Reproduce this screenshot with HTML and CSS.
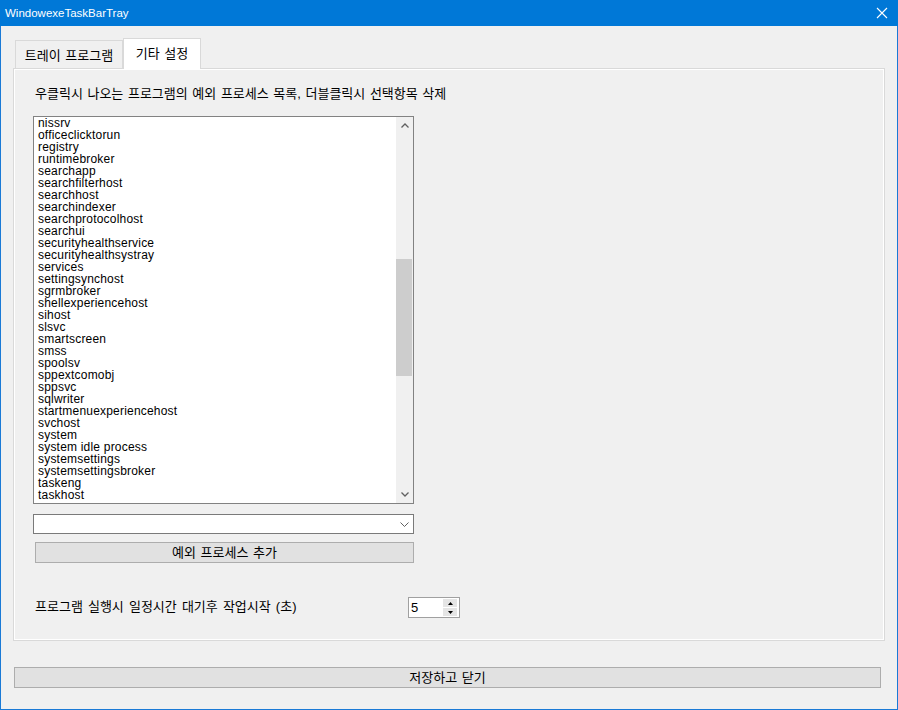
FILE: index.html
```html
<!DOCTYPE html>
<html lang="ko">
  <head>
    <meta charset="UTF-8" />
    <title>WindowexeTaskBarTray</title>
    <link rel="stylesheet" href="styles.css">
  </head>
  <body>
    <div class="window">
      <div class="titlebar">
        <span class="title">WindowexeTaskBarTray</span>
        <svg class="close" width="12" height="12" viewBox="0 0 12 12">
          <path d="M1 1 L11 11 M11 1 L1 11" stroke="#fff" stroke-width="1.1" fill="none" />
        </svg>
      </div>

      <div class="content">
        <div class="tabs">
          <div class="tab">트레이 프로그램</div>
          <div class="tab active">기타 설정</div>
        </div>

        <div class="pane">
          <div class="desc">우클릭시 나오는 프로그램의 예외 프로세스 목록, 더블클릭시 선택항목 삭제</div>

          <div class="listbox">
            <ul class="items">
              <li>nissrv</li>
              <li>officeclicktorun</li>
              <li>registry</li>
              <li>runtimebroker</li>
              <li>searchapp</li>
              <li>searchfilterhost</li>
              <li>searchhost</li>
              <li>searchindexer</li>
              <li>searchprotocolhost</li>
              <li>searchui</li>
              <li>securityhealthservice</li>
              <li>securityhealthsystray</li>
              <li>services</li>
              <li>settingsynchost</li>
              <li>sgrmbroker</li>
              <li>shellexperiencehost</li>
              <li>sihost</li>
              <li>slsvc</li>
              <li>smartscreen</li>
              <li>smss</li>
              <li>spoolsv</li>
              <li>sppextcomobj</li>
              <li>sppsvc</li>
              <li>sqlwriter</li>
              <li>startmenuexperiencehost</li>
              <li>svchost</li>
              <li>system</li>
              <li>system idle process</li>
              <li>systemsettings</li>
              <li>systemsettingsbroker</li>
              <li>taskeng</li>
              <li>taskhost</li>
            </ul>
            <div class="scrollbar">
              <div class="sb-btn">
                <svg width="8" height="5" viewBox="0 0 8 5"><path d="M0.5 4.5 L4 1 L7.5 4.5" stroke="#606060" stroke-width="1.3" fill="none" /></svg>
              </div>
              <div class="sb-track"><div class="sb-thumb"></div></div>
              <div class="sb-btn">
                <svg width="8" height="5" viewBox="0 0 8 5"><path d="M0.5 0.5 L4 4 L7.5 0.5" stroke="#606060" stroke-width="1.3" fill="none" /></svg>
              </div>
            </div>
          </div>

          <div class="combo">
            <svg width="9" height="5" viewBox="0 0 9 5"><path d="M0.5 0.5 L4.5 4.5 L8.5 0.5" stroke="#606060" stroke-width="1" fill="none" /></svg>
          </div>

          <button class="button add">예외 프로세스 추가</button>

          <div class="delay-row">
            <span class="delay-label">프로그램 실행시 일정시간 대기후 작업시작 (초)</span>
            <div class="spin">
              <span class="spin-value">5</span>
              <div class="spin-btns">
                <div class="spin-btn">
                  <svg width="5" height="3" viewBox="0 0 5 3"><path d="M0 3 L2.5 0 L5 3 Z" fill="#000" /></svg>
                </div>
                <div class="spin-btn">
                  <svg width="5" height="3" viewBox="0 0 5 3"><path d="M0 0 L2.5 3 L5 0 Z" fill="#000" /></svg>
                </div>
              </div>
            </div>
          </div>
        </div>

        <button class="button save">저장하고 닫기</button>
      </div>
    </div>
  </body>
</html>
```

FILE: styles.css
```css
* {
  box-sizing: border-box;
}
body {
  margin: 0;
  font-family: "Liberation Sans", "Noto Sans CJK KR", sans-serif;
  font-size: 13px;
  color: #000;
}
.window {
  width: 898px;
  height: 710px;
  background-color: #f0f0f0;
  border: 1px solid #1a7ad6;
  border-top: 0;
  display: flex;
  flex-direction: column;
}
.titlebar {
  height: 26px;
  margin: 0 -1px;
  background-color: #0078d7;
  color: white;
  display: flex;
  align-items: center;
  justify-content: space-between;
  padding: 0 10px 1px 5px;
}
.title {
  font-size: 11.5px;
}
.close {
  display: block;
}

.content {
  padding: 12px 0 0 12px;
}
.tabs {
  display: flex;
  align-items: flex-end;
  height: 30px;
  padding-left: 2px;
}
.tab {
  height: 28px;
  width: 108px;
  border: 1px solid #d9d9d9;
  border-bottom: 0;
  display: flex;
  align-items: center;
  justify-content: center;
  padding-bottom: 1px;
  word-spacing: 1px;
}
.tab.active {
  width: 78px;
  height: 31px;
  margin-bottom: -1px;
  background-color: white;
  position: relative;
  padding-bottom: 4px;
}
.pane {
  width: 872px;
  height: 573px;
  border: 1px solid #d9d9d9;
  box-shadow: inset 1px 1px 0 #fff, inset -1px -1px 0 #fff;
  padding: 17px 0 0 19px;
}
.desc {
  height: 16px;
  line-height: 16px;
  margin-left: 2px;
  word-spacing: 1px;
}

.listbox {
  margin-top: 14px;
  width: 381px;
  height: 388px;
  border: 1px solid #828282;
  background-color: white;
  display: flex;
  font-size: 12px;
}
.items {
  flex: 1;
  margin: 0;
  padding: 0 0 0 4px;
  list-style: none;
  overflow: hidden;
}
.items li {
  height: 12px;
  line-height: 12px;
  white-space: nowrap;
  letter-spacing: 0.2px;
}
.scrollbar {
  width: 17px;
  background-color: #f0f0f0;
  display: flex;
  flex-direction: column;
}
.sb-btn {
  height: 17px;
  display: flex;
  align-items: center;
  justify-content: center;
}
.sb-btn svg {
  display: block;
}
.sb-track {
  flex: 1;
}
.sb-thumb {
  margin: 125px 1px 0 0;
  height: 117px;
  background-color: #cdcdcd;
}

.combo {
  margin-top: 10px;
  width: 381px;
  height: 20px;
  border: 1px solid #7a7a7a;
  background-color: white;
  display: flex;
  align-items: center;
  justify-content: flex-end;
  padding-right: 4px;
}
.combo svg {
  display: block;
}

.button {
  display: block;
  font-family: inherit;
  font-size: 13px;
  color: #000;
  background-color: #e1e1e1;
  border: 1px solid #adadad;
  padding: 0;
  height: 21px;
  line-height: 18px;
  word-spacing: 1px;
}
.button.add {
  margin: 8px 0 0 2px;
  width: 379px;
}
.button.save {
  margin: 26px 0 0 1px;
  width: 867px;
}

.delay-row {
  margin-top: 34px;
  display: flex;
  align-items: center;
  height: 21px;
}
.delay-label {
  margin-left: 2px;
  width: 373px;
  word-spacing: 1.5px;
  padding-bottom: 5px;
}
.spin {
  width: 52px;
  height: 21px;
  border: 1px solid #a0a0a0;
  background-color: white;
  display: flex;
  align-items: stretch;
}
.spin-value {
  flex: 1;
  padding: 1px 0 0 2px;
  font-size: 13px;
  line-height: 17px;
}
.spin-btns {
  width: 14px;
  margin: 1px 2px 1px 0;
  display: flex;
  flex-direction: column;
  gap: 1px;
}
.spin-btn {
  flex: 1;
  background-color: #e5e5e5;
  display: flex;
  align-items: center;
  justify-content: center;
}
.spin-btn svg {
  display: block;
}
```
